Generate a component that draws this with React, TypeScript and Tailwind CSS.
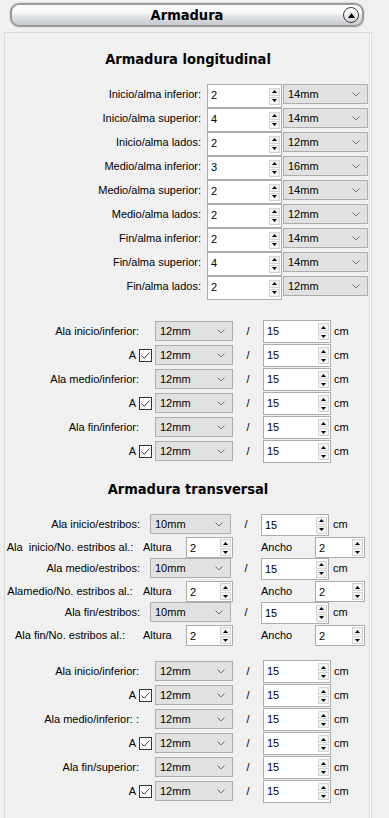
import React from "react";

function Arrow({ up }: { up?: boolean }) {
  return (
    <div className="flex h-[8px] w-[11px] items-center justify-center border border-[#d2d2d2] bg-[#f3f3f3]">
      <svg width="5" height="3" viewBox="0 0 5 3">
        {up ? <path d="M2.5 0L5 3H0Z" fill="#000" /> : <path d="M0 0H5L2.5 3Z" fill="#000" />}
      </svg>
    </div>
  );
}

function Spin({ value, cls }: { value: string; cls: string }) {
  return (
    <div className={"flex shrink-0 border border-[#acacac] bg-white " + cls}>
      <div className="flex-1 pl-[3px] leading-[20px]">{value}</div>
      <div className="flex flex-col justify-center gap-[1px] pr-[1px]">
        <Arrow up />
        <Arrow />
      </div>
    </div>
  );
}

function Combo({ value, cls }: { value: string; cls: string }) {
  return (
    <div className={"flex shrink-0 items-center justify-between border border-[#adadad] bg-[#e1e1e1] pl-[4px] pr-[7px] " + cls}>
      <span className="leading-[18px]">{value}</span>
      <svg width="8" height="5" viewBox="0 0 8 5">
        <polyline points="0.5,0.5 4,4 7.5,0.5" fill="none" stroke="#707070" strokeWidth="1" />
      </svg>
    </div>
  );
}

function Check() {
  return (
    <div className="flex h-[13px] w-[13px] items-center justify-center border border-[#333333] bg-white">
      <svg width="11" height="11" viewBox="0 0 11 11">
        <polyline points="1.5,5.5 4.2,8.2 9.5,2.5" fill="none" stroke="#333333" strokeWidth="1" />
      </svg>
    </div>
  );
}

function LongRow({ label, n, d }: { label: string; n: string; d: string }) {
  return (
    <div className="flex h-[24px] items-start">
      <div className="w-[198px] shrink-0 pr-[2px] text-right leading-[20px]">{label}</div>
      <Spin value={n} cls="ml-[4px] w-[75px] h-[24px]" />
      <Combo value={d} cls="ml-[1px] w-[85px] h-[20px]" />
    </div>
  );
}

function AlaRow({ label, check }: { label?: string; check?: boolean }) {
  return (
    <div className="flex h-[24px] items-start">
      {check ? (
        <div className="mt-[1px] flex h-[20px] w-[150px] shrink-0 items-center justify-end gap-[3px] pr-[3px]">
          <span className="leading-[20px]">A</span>
          <Check />
        </div>
      ) : (
        <div className="mt-[1px] w-[150px] shrink-0 pr-[16px] text-right leading-[20px]">{label}</div>
      )}
      <Combo value="12mm" cls="mt-[1px] w-[78px] h-[20px]" />
      <div className="mt-[1px] w-[30px] shrink-0 text-center leading-[20px]">/</div>
      <Spin value="15" cls="w-[68px] h-[23px]" />
      <div className="ml-[3px] mt-[1px] leading-[20px]">cm</div>
    </div>
  );
}

function EstRow({ label }: { label: string }) {
  return (
    <div className="flex h-[22px] items-start">
      <div className="w-[145px] shrink-0 pr-[10px] text-right leading-[20px]">{label}</div>
      <Combo value="10mm" cls="w-[81px] h-[20px]" />
      <div className="w-[30px] shrink-0 text-center leading-[20px]">/</div>
      <Spin value="15" cls="w-[68px] h-[22px]" />
      <div className="ml-[4px] leading-[20px]">cm</div>
    </div>
  );
}

function NoRow({ label }: { label: string }) {
  return (
    <div className="flex h-[22px] items-start">
      <div className="mt-[1px] w-[130px] shrink-0 whitespace-pre text-center leading-[20px]">{label}</div>
      <div className="mt-[1px] w-[51px] shrink-0 pl-[8px] leading-[20px]">Altura</div>
      <Spin value="2" cls="mt-[1px] w-[47px] h-[21px]" />
      <div className="mt-[1px] w-[82px] shrink-0 pl-[28px] leading-[20px]">Ancho</div>
      <Spin value="2" cls="mt-[1px] w-[50px] h-[21px]" />
    </div>
  );
}

export default function App() {
  const heading =
    "text-center text-[14.5px] font-bold leading-[20px] text-black font-[family-name:'DejaVu_Sans_Condensed','DejaVu_Sans',sans-serif]";
  return (
    <div className="h-[818px] w-[389px] overflow-hidden bg-[#f0f0f0] pt-[3px] text-[11px] text-black font-[family-name:'Liberation_Sans',Arial,sans-serif]">
      <div className="ml-[10px] grid h-[24px] w-[354px] grid-cols-[1fr_auto_1fr] items-center rounded-[9px] border-2 border-[#9a9a9a] bg-[linear-gradient(to_bottom,#ffffff_0%,#f6f7f8_40%,#e2e4e8_55%,#c5c8cf_100%)] shadow-[0_0_0_1px_#dedede]">
        <div />
        <div className={heading}>Armadura</div>
        <div className="flex justify-end pr-[3px]">
          <div className="flex h-[16px] w-[16px] items-center justify-center rounded-full border border-[#3a3a3a] bg-[linear-gradient(to_bottom,#ffffff,#d6d6d6)]">
            <svg width="7" height="5" viewBox="0 0 7 5">
              <path d="M3.5 0L7 5H0Z" fill="#000" />
            </svg>
          </div>
        </div>
      </div>

      <div className="ml-[4px] mt-[5px] h-[800px] w-[368px] border-l border-r border-t border-[#d9d9d9] shadow-[inset_-1px_0_0_#ffffff,inset_-2px_0_0_#d9d9d9]">
        <div className={"pt-[16px] " + heading}>Armadura longitudinal</div>
        <div className="mt-[15px]">
          <LongRow label="Inicio/alma inferior:" n="2" d="14mm" />
          <LongRow label="Inicio/alma superior:" n="4" d="14mm" />
          <LongRow label="Inicio/alma lados:" n="2" d="12mm" />
          <LongRow label="Medio/alma inferior:" n="3" d="16mm" />
          <LongRow label="Medio/alma superior:" n="2" d="14mm" />
          <LongRow label="Medio/alma lados:" n="2" d="12mm" />
          <LongRow label="Fin/alma inferior:" n="2" d="14mm" />
          <LongRow label="Fin/alma superior:" n="4" d="14mm" />
          <LongRow label="Fin/alma lados:" n="2" d="12mm" />
        </div>

        <div className="mt-[20px]">
          <AlaRow label="Ala inicio/inferior:" />
          <AlaRow check />
          <AlaRow label="Ala medio/inferior:" />
          <AlaRow check />
          <AlaRow label="Ala fin/inferior:" />
          <AlaRow check />
        </div>

        <div className={"mt-[15px] " + heading}>Armadura transversal</div>
        <div className="mt-[15px]">
          <EstRow label="Ala inicio/estribos:" />
          <NoRow label="Ala  inicio/No. estribos al.:" />
          <EstRow label="Ala medio/estribos:" />
          <NoRow label="Alamedio/No. estribos al.:" />
          <EstRow label="Ala fin/estribos:" />
          <NoRow label="Ala fin/No. estribos al.:" />
        </div>

        <div className="mt-[14px]">
          <AlaRow label="Ala inicio/inferior:" />
          <AlaRow check />
          <AlaRow label="Ala medio/inferior: :" />
          <AlaRow check />
          <AlaRow label="Ala fin/superior:" />
          <AlaRow check />
        </div>
      </div>
    </div>
  );
}
